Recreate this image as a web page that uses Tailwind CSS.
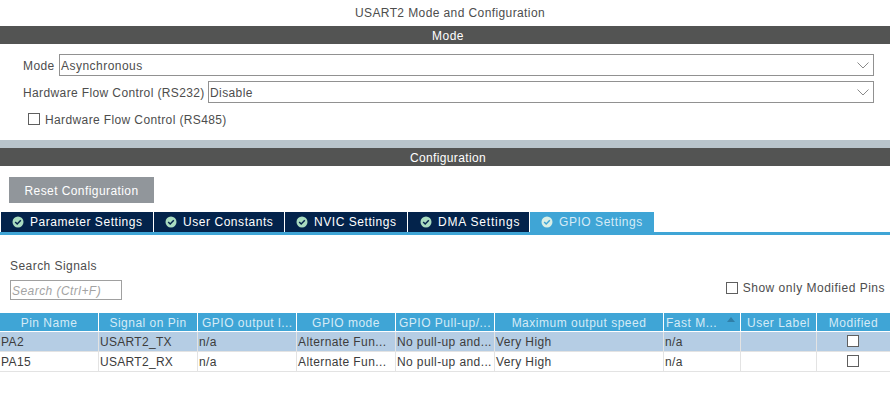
<!DOCTYPE html>
<html lang="en">
<head>
    <meta charset="UTF-8">
    <title>USART2 Mode and Configuration</title>
    <script src="https://cdn.jsdelivr.net/npm/@tailwindcss/browser@4"></script>
</head>
<body class="bg-white font-['Liberation_Sans',Arial,sans-serif] text-[12px] text-[#4d4d4d] overflow-hidden">
    <div class="w-[890px] h-[408px] flex flex-col">
        <div class="h-[26px] flex items-center justify-center pl-[10px] tracking-[0.4px]">USART2 Mode and Configuration</div>

        <!-- Mode -->
        <div class="h-[18px] bg-[#535453] text-white flex items-center justify-center pl-[6px] pt-[1px] tracking-[0.45px]">Mode</div>
        <div class="h-[96px] pt-[10px] pl-[23px] tracking-[0.4px]">
            <div class="flex items-center h-[22px]">
                <span class="w-[36px] pt-[1px]">Mode</span>
                <div class="w-[815px] h-[22px] border border-[#919191] flex items-center justify-between pl-[1px] pr-[4px] tracking-[0.47px]">
                    <span class="pt-[1px]">Asynchronous</span>
                    <svg width="12" height="7" viewBox="0 0 12 7" fill="none" stroke="#8a8a8a"><path d="M0.5 0.5L6 6L11.5 0.5"/></svg>
                </div>
            </div>
            <div class="flex items-center h-[22px] mt-[5px]">
                <span class="w-[185px] pt-[1px] whitespace-nowrap tracking-[0.38px]">Hardware Flow Control (RS232)</span>
                <div class="w-[666px] h-[22px] border border-[#919191] flex items-center justify-between pl-[1px] pr-[4px]">
                    <span class="pt-[1px]">Disable</span>
                    <svg width="12" height="7" viewBox="0 0 12 7" fill="none" stroke="#8a8a8a"><path d="M0.5 0.5L6 6L11.5 0.5"/></svg>
                </div>
            </div>
            <div class="flex items-center h-[12px] mt-[10px] pl-[5px]">
                <span class="w-[12px] h-[12px] border border-[#5f5f5f] mr-[5px]"></span>
                <span class="pt-[1px] whitespace-nowrap tracking-[0.38px]">Hardware Flow Control (RS485)</span>
            </div>
        </div>

        <!-- Configuration -->
        <div class="h-[8px] bg-[#b9c5cc]"></div>
        <div class="h-[18px] bg-[#535453] text-white flex items-center justify-center pl-[6px] pt-[1px] tracking-[0.35px]">Configuration</div>
        <div class="pt-[11px] pl-[9px]">
            <button class="w-[145px] h-[26px] pt-[1px] bg-[#91969b] text-white tracking-[0.42px]">Reset Configuration</button>
        </div>

        <!-- Tabs -->
        <div class="mt-[9px] h-[23px] border-b-[3px] border-[#3fa5d6] flex pl-[1px] gap-[1px] tracking-[0.55px] text-white">
            <div class="w-[152px] bg-[#03234b] flex items-center pl-[11px] gap-[6px]">
                <svg width="12" height="12" viewBox="0 0 12 12"><circle cx="6" cy="6" r="5.5" fill="#a9dcc0"/><path d="M3.2 6L5.2 8L8.8 4.3" fill="none" stroke="#03234b" stroke-width="1.5"/></svg>
                Parameter Settings
            </div>
            <div class="w-[130px] bg-[#03234b] flex items-center pl-[11px] gap-[6px]">
                <svg width="12" height="12" viewBox="0 0 12 12"><circle cx="6" cy="6" r="5.5" fill="#a9dcc0"/><path d="M3.2 6L5.2 8L8.8 4.3" fill="none" stroke="#03234b" stroke-width="1.5"/></svg>
                User Constants
            </div>
            <div class="w-[122px] bg-[#03234b] flex items-center pl-[11px] gap-[6px]">
                <svg width="12" height="12" viewBox="0 0 12 12"><circle cx="6" cy="6" r="5.5" fill="#a9dcc0"/><path d="M3.2 6L5.2 8L8.8 4.3" fill="none" stroke="#03234b" stroke-width="1.5"/></svg>
                NVIC Settings
            </div>
            <div class="w-[121px] bg-[#03234b] flex items-center pl-[12px] gap-[6px] tracking-[0.8px]">
                <svg width="12" height="12" viewBox="0 0 12 12"><circle cx="6" cy="6" r="5.5" fill="#a9dcc0"/><path d="M3.2 6L5.2 8L8.8 4.3" fill="none" stroke="#03234b" stroke-width="1.5"/></svg>
                DMA Settings
            </div>
            <div class="w-[124px] bg-[#3fa5d6] flex items-center pl-[11px] gap-[6px] text-[#d5ebf6]">
                <svg width="12" height="12" viewBox="0 0 12 12"><circle cx="6" cy="6" r="5.5" fill="#d8eee6"/><path d="M3.2 6L5.2 8L8.8 4.3" fill="none" stroke="#3fa5d6" stroke-width="1.5"/></svg>
                GPIO Settings
            </div>
        </div>

        <!-- Search -->
        <div class="h-[78px] pl-[10px] pr-[5px] flex justify-between tracking-[0.45px]">
            <div class="pt-[24px]">
                <div class="h-[14px] leading-[14px]">Search Signals</div>
                <div class="mt-[7px] w-[112px] h-[20px] border border-[#a0a0a0] pl-[1px] pt-[1px] flex items-center italic text-[#a3a3a3]">Search (Ctrl+F)</div>
            </div>
            <div class="pt-[46px] flex items-start">
                <span class="w-[12px] h-[12px] border border-[#5f5f5f] mr-[5px] mt-[1px]"></span>
                <span class="whitespace-nowrap leading-[14px] tracking-[0.5px]">Show only Modified Pins</span>
            </div>
        </div>

        <!-- Signals table -->
        <div class="grid grid-cols-[99px_99px_99px_99px_99px_169px_77px_76px_73px] tracking-[0.4px] whitespace-nowrap leading-[20px]">
            <div class="h-[19px] bg-[#3fa5d6] text-[#d5ebf6] border-r border-b border-white text-center tracking-[0.5px]">Pin Name</div>
            <div class="h-[19px] bg-[#3fa5d6] text-[#d5ebf6] border-r border-b border-white text-center tracking-[0.5px]">Signal on Pin</div>
            <div class="h-[19px] bg-[#3fa5d6] text-[#d5ebf6] border-r border-b border-white pl-[4px] tracking-[0.5px]">GPIO output l...</div>
            <div class="h-[19px] bg-[#3fa5d6] text-[#d5ebf6] border-r border-b border-white text-center tracking-[0.5px]">GPIO mode</div>
            <div class="h-[19px] bg-[#3fa5d6] text-[#d5ebf6] border-r border-b border-white pl-[3px] tracking-[0.5px]">GPIO Pull-up/...</div>
            <div class="h-[19px] bg-[#3fa5d6] text-[#d5ebf6] border-r border-b border-white text-center tracking-[0.5px]">Maximum output speed</div>
            <div class="h-[19px] bg-[#3fa5d6] text-[#d5ebf6] border-r border-b border-white pl-[2px] relative tracking-[0.5px]">Fast M...<svg class="absolute right-[5px] top-[4px]" width="8" height="5" viewBox="0 0 8 5"><path d="M0 5L4 0L8 5Z" fill="#2f7fa8"/></svg></div>
            <div class="h-[19px] bg-[#3fa5d6] text-[#d5ebf6] border-r border-b border-white text-center tracking-[0.5px]">User Label</div>
            <div class="h-[19px] bg-[#3fa5d6] text-[#d5ebf6] border-b border-white text-center tracking-[0.5px]">Modified</div>

            <div class="h-[20px] bg-[#b5cde4] border-r border-b border-[#e3e3e3] pl-[1px] text-[#3c3c3c]">PA2</div>
            <div class="h-[20px] bg-[#b5cde4] border-r border-b border-[#e3e3e3] pl-[1px] text-[#3c3c3c] tracking-[0.3px]">USART2_TX</div>
            <div class="h-[20px] bg-[#b5cde4] border-r border-b border-[#e3e3e3] pl-[1px] text-[#3c3c3c]">n/a</div>
            <div class="h-[20px] bg-[#b5cde4] border-r border-b border-[#e3e3e3] pl-[1px] text-[#3c3c3c]">Alternate Fun...</div>
            <div class="h-[20px] bg-[#b5cde4] border-r border-b border-[#e3e3e3] pl-[1px] text-[#3c3c3c]">No pull-up and...</div>
            <div class="h-[20px] bg-[#b5cde4] border-r border-b border-[#e3e3e3] pl-[1px] text-[#3c3c3c]">Very High</div>
            <div class="h-[20px] bg-[#b5cde4] border-r border-b border-[#e3e3e3] pl-[1px] text-[#3c3c3c]">n/a</div>
            <div class="h-[20px] bg-[#b5cde4] border-r border-b border-[#e3e3e3]"></div>
            <div class="h-[20px] bg-[#b5cde4] border-b border-[#e3e3e3] flex items-start justify-center pt-[3px] pr-[1px]"><span class="w-[12px] h-[12px] bg-white border border-[#5f5f5f]"></span></div>

            <div class="h-[20px] border-r border-b border-[#e3e3e3] pl-[1px] text-[#3c3c3c]">PA15</div>
            <div class="h-[20px] border-r border-b border-[#e3e3e3] pl-[1px] text-[#3c3c3c] tracking-[0.3px]">USART2_RX</div>
            <div class="h-[20px] border-r border-b border-[#e3e3e3] pl-[1px] text-[#3c3c3c]">n/a</div>
            <div class="h-[20px] border-r border-b border-[#e3e3e3] pl-[1px] text-[#3c3c3c]">Alternate Fun...</div>
            <div class="h-[20px] border-r border-b border-[#e3e3e3] pl-[1px] text-[#3c3c3c]">No pull-up and...</div>
            <div class="h-[20px] border-r border-b border-[#e3e3e3] pl-[1px] text-[#3c3c3c]">Very High</div>
            <div class="h-[20px] border-r border-b border-[#e3e3e3] pl-[1px] text-[#3c3c3c]">n/a</div>
            <div class="h-[20px] border-r border-b border-[#e3e3e3]"></div>
            <div class="h-[20px] border-b border-[#e3e3e3] flex items-start justify-center pt-[3px] pr-[1px]"><span class="w-[12px] h-[12px] bg-white border border-[#5f5f5f]"></span></div>
        </div>
    </div>
</body>
</html>
